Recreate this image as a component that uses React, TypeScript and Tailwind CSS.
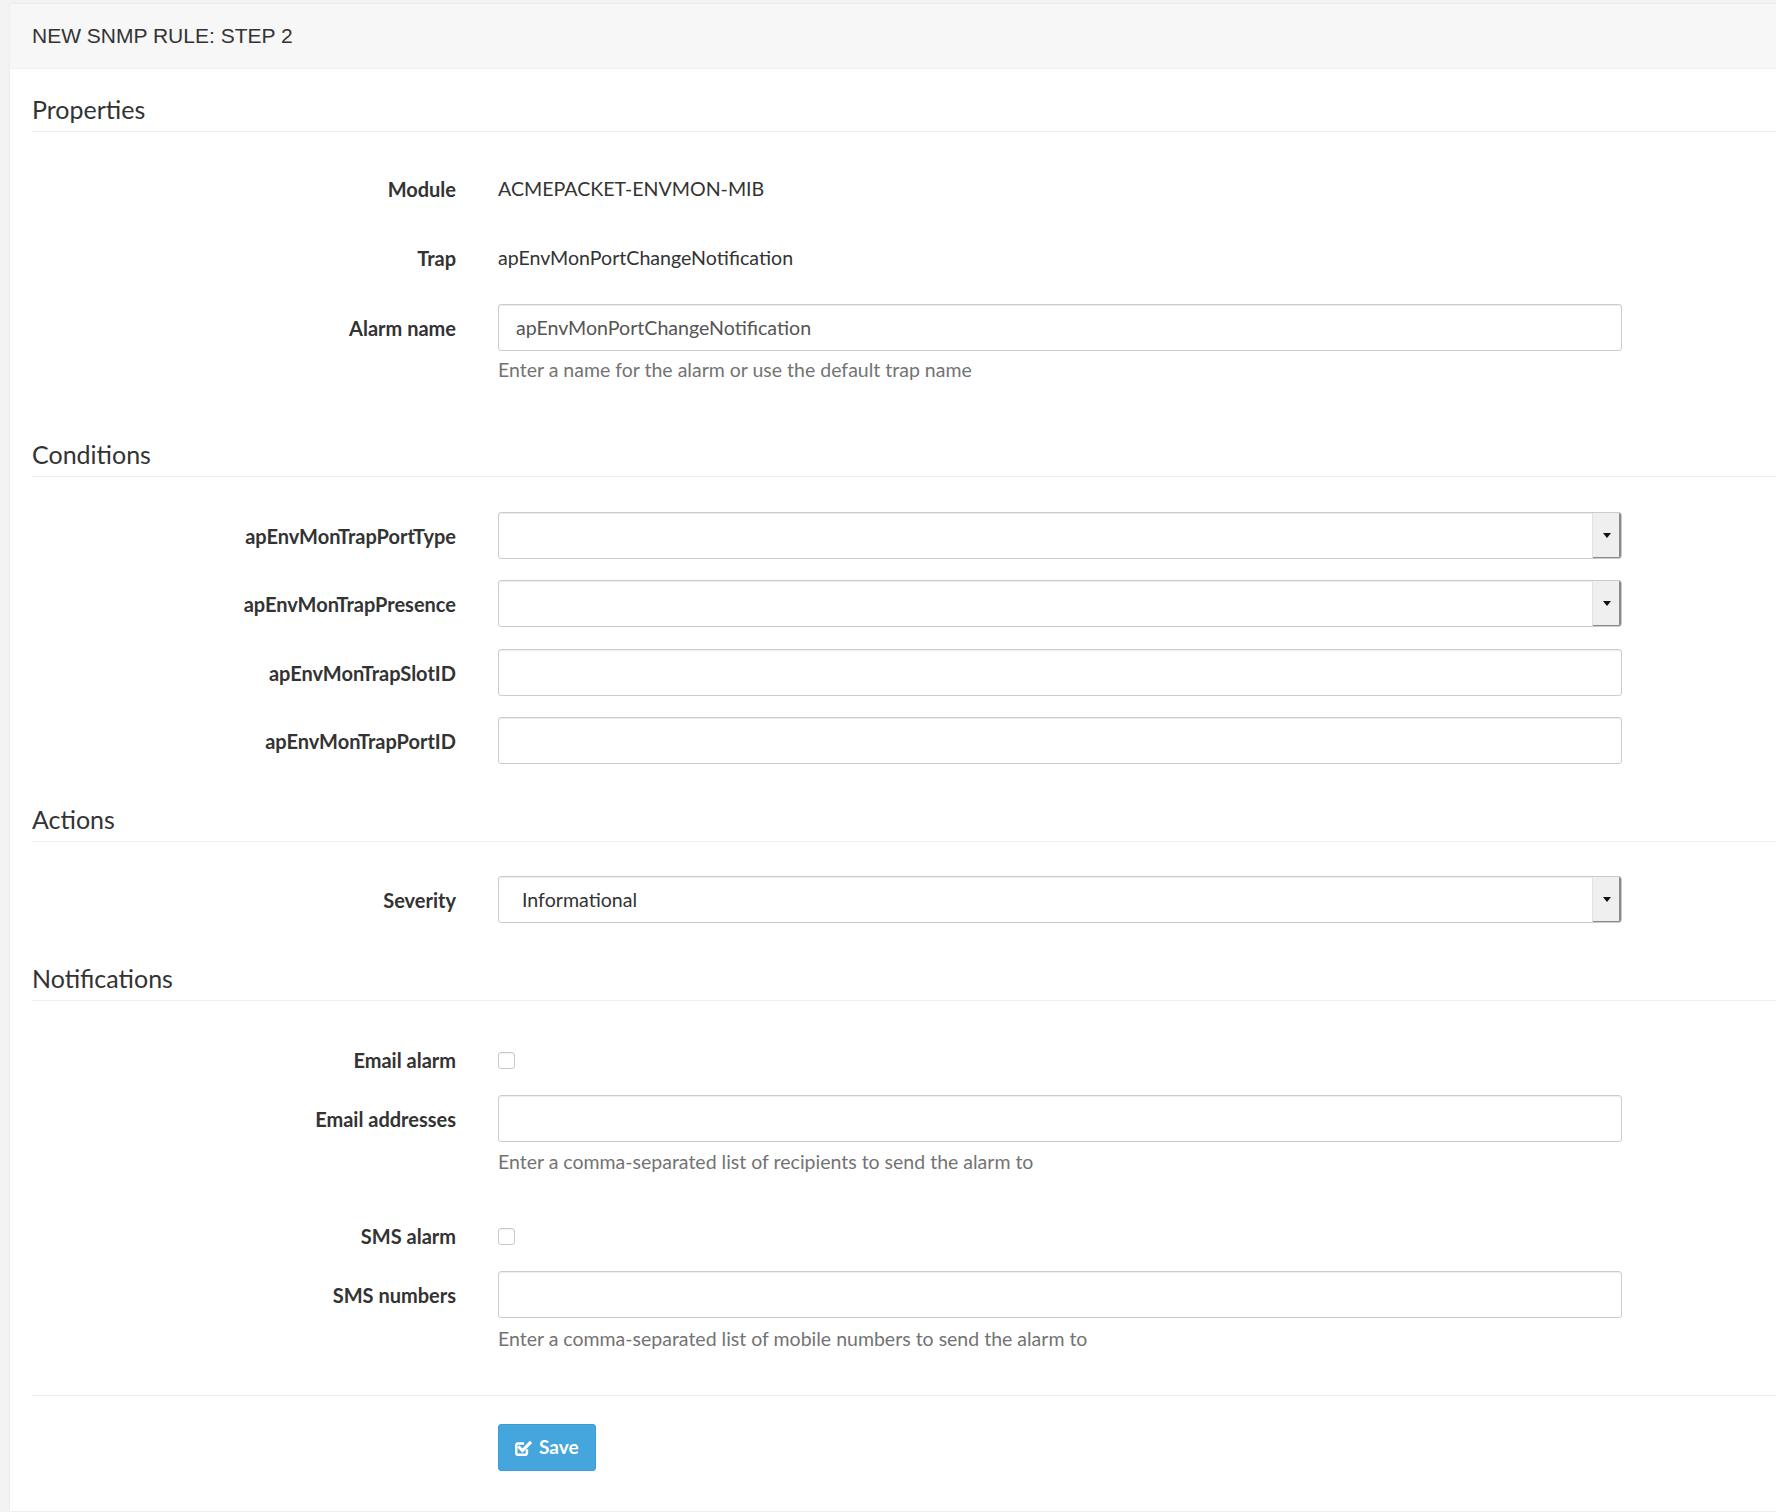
import React from 'react';

const labelCls = "w-[424px] shrink-0 text-right font-bold text-[20px] text-[#333]";
const inputCls =
  "w-[1124px] h-[47px] rounded-[3px] border border-[#cccccc] bg-white shadow-[inset_0_1px_1px_rgba(0,0,0,0.075)]";

const SectionTitle: React.FC<{ title: string; className?: string }> = ({ title, className }) => (
  <div className={`border-b border-[#eeeeee] pb-[7px] ${className ?? ''}`}>
    <h3 className="h-[30px] leading-[30px] text-[25px] text-[#333] font-normal">{title}</h3>
  </div>
);

const Row: React.FC<{ label: string; className?: string; children?: React.ReactNode }> = ({
  label,
  className,
  children,
}) => (
  <div className={`flex items-center gap-[42px] ${className ?? ''}`}>
    <label className={labelCls}>{label}</label>
    {children}
  </div>
);

const TextInput: React.FC<{ value?: string }> = ({ value }) => (
  <div className={`${inputCls} flex items-center pl-[17px] text-[19.6px] text-[#555]`}>{value}</div>
);

const SelectBox: React.FC<{ value?: string }> = ({ value }) => (
  <div className={`${inputCls} flex overflow-hidden`}>
    <div className="flex-1 flex items-center pl-[23px] text-[19.6px] text-[#333]">{value}</div>
    <div className="w-[29px] bg-[#efefef] border-l border-[#e2e2e2] flex items-center justify-center shadow-[inset_-2px_-1px_0_#8a8a8a]">
      <div className="w-0 h-0 border-l-[4px] border-r-[4px] border-t-[5px] border-l-transparent border-r-transparent border-t-[#111]" />
    </div>
  </div>
);

const Checkbox: React.FC = () => (
  <div className="w-[17px] h-[17px] rounded-[3px] border border-[#c9c9c9] bg-white shadow-[inset_0_1px_1px_rgba(0,0,0,0.06)]" />
);

const Help: React.FC<{ text: string; className?: string }> = ({ text, className }) => (
  <div className={`pl-[466px] text-[19.5px] leading-[26px] text-[#737373] ${className ?? ''}`}>{text}</div>
);

export default function App() {
  return (
    <div
      className="min-h-screen bg-[#f3f3f3] pl-[10px] pt-[4px]"
      style={{ fontFamily: 'Lato, "Open Sans", sans-serif' }}
    >
      <div className="bg-white shadow-[0_0_2px_rgba(0,0,0,0.08)] pb-[40px]">
        <div className="h-[65px] bg-[#f7f7f7] border-b border-[#efefef] flex items-center px-[22px]">
          <span className="text-[21px] text-[#333]" style={{ fontFamily: '"Liberation Sans", Arial, sans-serif' }}>
            NEW SNMP RULE: STEP 2
          </span>
        </div>

        <div className="pl-[22px]">
          {/* Properties */}
          <SectionTitle title="Properties" className="mt-[25px]" />
          <Row label="Module" className="h-[47px] mt-[33px]">
            <span className="text-[19.6px] text-[#333]">ACMEPACKET-ENVMON-MIB</span>
          </Row>
          <Row label="Trap" className="h-[47px] mt-[22px]">
            <span className="text-[19.6px] text-[#333]">apEnvMonPortChangeNotification</span>
          </Row>
          <Row label="Alarm name" className="mt-[23px]">
            <TextInput value="apEnvMonPortChangeNotification" />
          </Row>
          <Help text="Enter a name for the alarm or use the default trap name" className="mt-[6px]" />

          {/* Conditions */}
          <SectionTitle title="Conditions" className="mt-[56px]" />
          <Row label="apEnvMonTrapPortType" className="mt-[35px]">
            <SelectBox />
          </Row>
          <Row label="apEnvMonTrapPresence" className="mt-[21px]">
            <SelectBox />
          </Row>
          <Row label="apEnvMonTrapSlotID" className="mt-[22px]">
            <TextInput />
          </Row>
          <Row label="apEnvMonTrapPortID" className="mt-[21px]">
            <TextInput />
          </Row>

          {/* Actions */}
          <SectionTitle title="Actions" className="mt-[40px]" />
          <Row label="Severity" className="mt-[34px]">
            <SelectBox value="Informational" />
          </Row>

          {/* Notifications */}
          <SectionTitle title="Notifications" className="mt-[40px]" />
          <Row label="Email alarm" className="h-[36px] mt-[41px]">
            <Checkbox />
          </Row>
          <Row label="Email addresses" className="mt-[17px]">
            <TextInput />
          </Row>
          <Help text="Enter a comma-separated list of recipients to send the alarm to" className="mt-[7px]" />
          <Row label="SMS alarm" className="h-[36px] mt-[43px]">
            <Checkbox />
          </Row>
          <Row label="SMS numbers" className="mt-[17px]">
            <TextInput />
          </Row>
          <Help text="Enter a comma-separated list of mobile numbers to send the alarm to" className="mt-[8px]" />

          <div className="mt-[43px] border-t border-[#eeeeee]" />

          <div className="mt-[28px] pl-[466px]">
            <button className="h-[47px] w-[98px] rounded-[3px] bg-[#44a6dc] border border-[#3c9dd2] flex items-center pl-[15px] gap-[7px] text-white font-bold text-[19px]">
              <svg width="18" height="18" viewBox="0 0 16 16" fill="none" stroke="white">
                <path
                  d="M11.5 9v3.5a1.5 1.5 0 0 1-1.5 1.5H3.5A1.5 1.5 0 0 1 2 12.5V5.5A1.5 1.5 0 0 1 3.5 4H9"
                  strokeWidth="2.2"
                />
                <path d="M4.8 7.6l2.7 2.7L14.2 3.6" strokeWidth="2.8" strokeLinecap="square" />
              </svg>
              Save
            </button>
          </div>
        </div>
      </div>
    </div>
  );
}
